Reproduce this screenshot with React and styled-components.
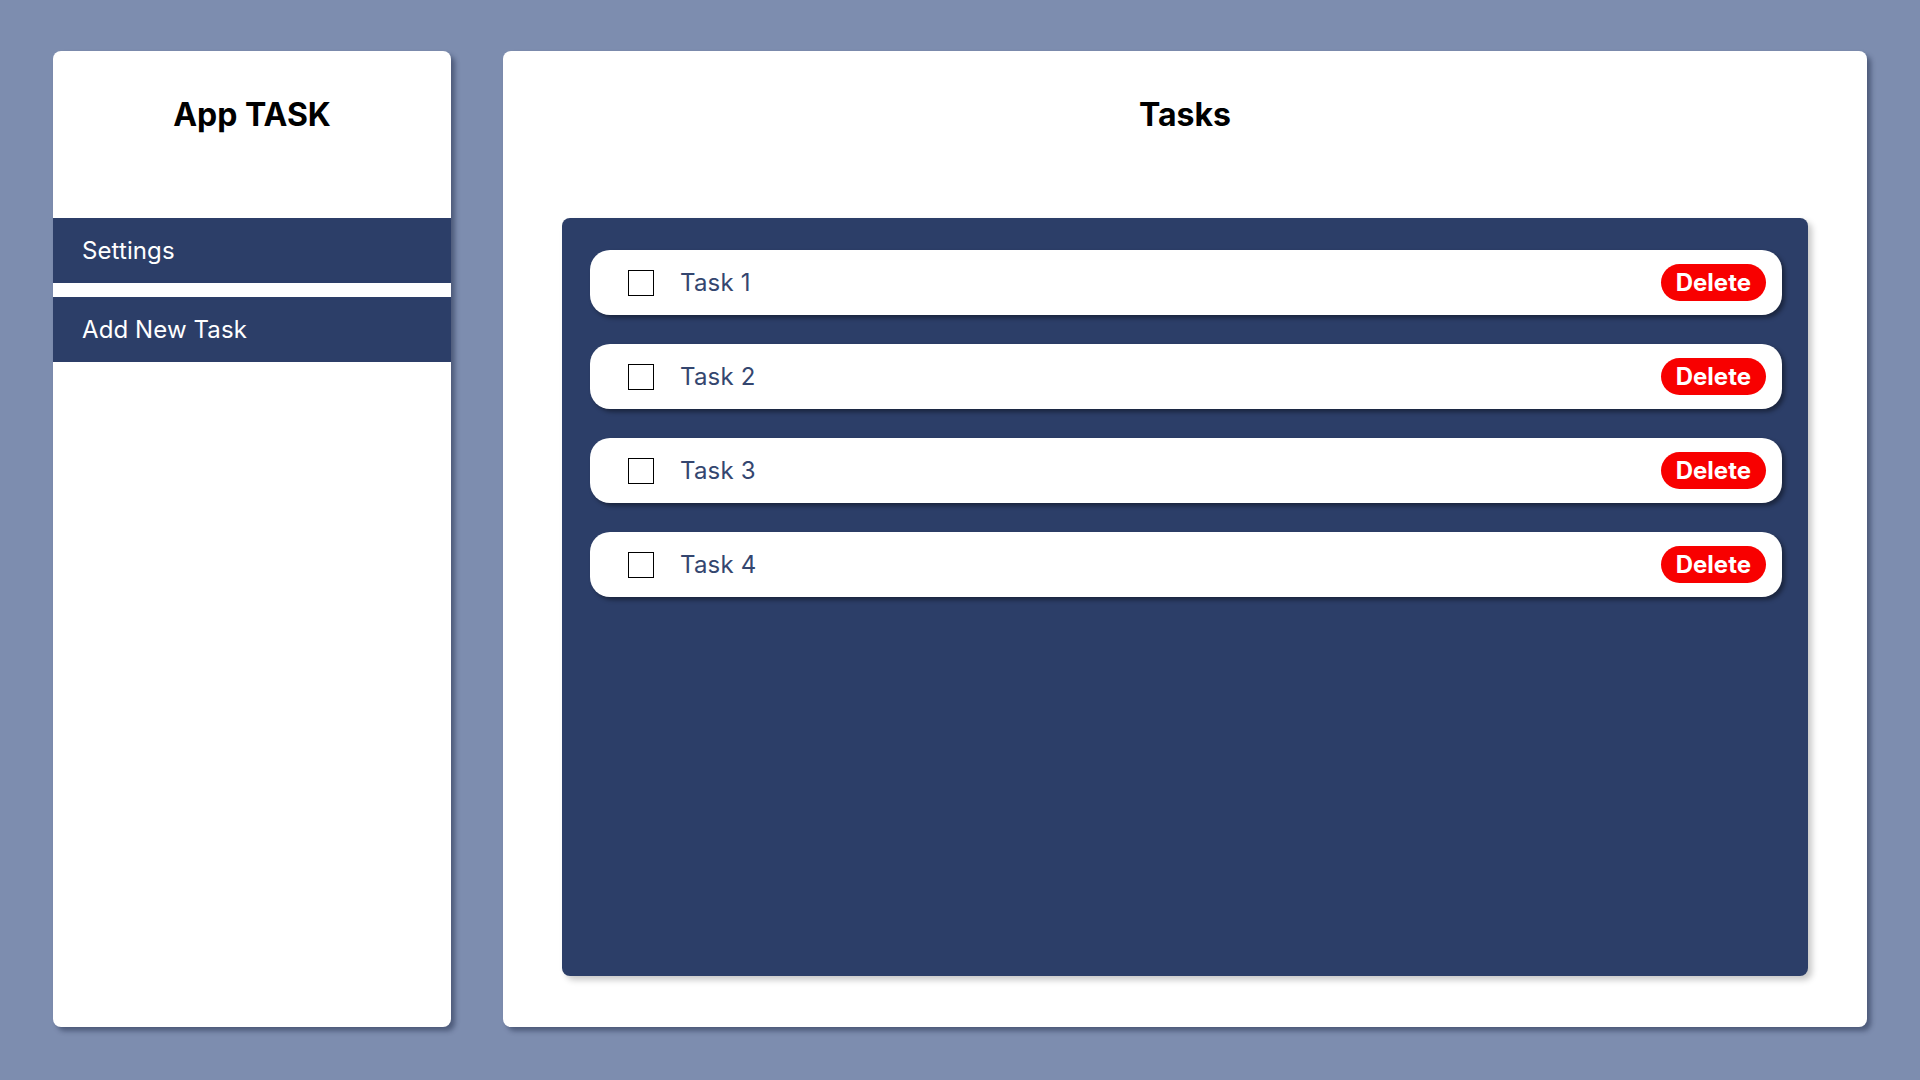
import React, { useState } from "react";
import styled, { createGlobalStyle } from "styled-components";

const GlobalStyle = createGlobalStyle`
  html, body {
    margin: 0;
    padding: 0;
    background: #7d8daf;
    font-family: Inter, "Noto Sans", sans-serif;
  }
  * { box-sizing: border-box; }
`;

const Page = styled.div`
  display: flex;
  gap: 52px;
  padding: 51px 53px 53px;
  height: 1080px;
`;

const Card = styled.div`
  background: #ffffff;
  border-radius: 8px;
  box-shadow: 4px 4px 5px rgba(20, 30, 60, 0.45);
  display: flex;
  flex-direction: column;
`;

const Sidebar = styled(Card)`
  width: 398px;
  flex-shrink: 0;
`;

const Main = styled(Card)`
  flex: 1;
  padding: 0 59px 51px;
`;

const Title = styled.h1`
  margin: 0;
  height: 167px;
  padding-top: 45px;
  font-size: 32px;
  font-weight: 700;
  line-height: 38px;
  color: #000;
  text-align: center;
`;

const Nav = styled.nav`
  display: flex;
  flex-direction: column;
  gap: 14px;
`;

const NavItem = styled.div`
  height: 65px;
  display: flex;
  align-items: center;
  padding-left: 29px;
  background: #2c3e68;
  color: #ffffff;
  font-size: 24px;
  letter-spacing: 0.1px;
  cursor: pointer;
`;

const Board = styled.div`
  flex: 1;
  background: #2c3e68;
  border-radius: 8px;
  padding: 32px 26px 32px 28px;
  display: flex;
  flex-direction: column;
  gap: 29px;
  box-shadow: 4px 4px 6px rgba(0, 0, 0, 0.22);
`;

const Row = styled.div`
  height: 65px;
  background: #ffffff;
  border-radius: 20px;
  display: flex;
  align-items: center;
  padding: 0 16px 0 38px;
  box-shadow: 3px 3px 4px rgba(0, 0, 0, 0.4);
`;

const Check = styled.input.attrs({ type: "checkbox" })`
  appearance: none;
  width: 26px;
  height: 26px;
  margin: 0 26px 0 0;
  border: 1.5px solid #000;
  background: #fff;
  cursor: pointer;
  &:checked {
    background: #2c3e68;
  }
`;

const Label = styled.span`
  flex: 1;
  font-size: 24px;
  letter-spacing: 0.2px;
  color: #34466f;
  text-decoration: ${p => (p.$done ? "line-through" : "none")};
`;

const DeleteButton = styled.button`
  height: 37px;
  padding: 0 15px;
  border: none;
  border-radius: 19px;
  background: #f80000;
  color: #fff;
  font-family: Inter, sans-serif;
  font-size: 24px;
  font-weight: 700;
  cursor: pointer;
`;

const initialTasks = [
  { id: 1, name: "Task 1", done: false },
  { id: 2, name: "Task 2", done: false },
  { id: 3, name: "Task 3", done: false },
  { id: 4, name: "Task 4", done: false },
];

const App = () => {
  const [tasks, setTasks] = useState(initialTasks);

  const toggle = id =>
    setTasks(ts => ts.map(t => (t.id === id ? { ...t, done: !t.done } : t)));
  const remove = id => setTasks(ts => ts.filter(t => t.id !== id));

  return (
    <>
      <GlobalStyle />
      <Page>
        <Sidebar>
          <Title>App TASK</Title>
          <Nav>
            <NavItem>Settings</NavItem>
            <NavItem>Add New Task</NavItem>
          </Nav>
        </Sidebar>
        <Main>
          <Title>Tasks</Title>
          <Board>
            {tasks.map(t => (
              <Row key={t.id}>
                <Check checked={t.done} onChange={() => toggle(t.id)} />
                <Label $done={t.done}>{t.name}</Label>
                <DeleteButton onClick={() => remove(t.id)}>Delete</DeleteButton>
              </Row>
            ))}
          </Board>
        </Main>
      </Page>
    </>
  );
};

export default App;
